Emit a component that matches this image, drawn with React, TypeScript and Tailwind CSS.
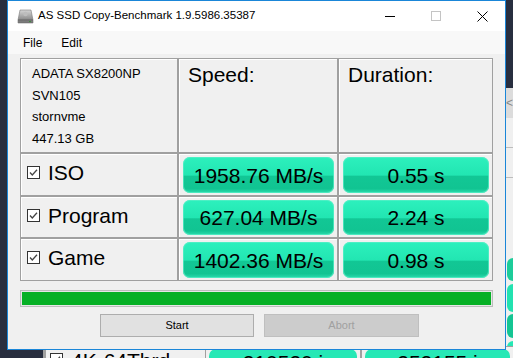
import React from 'react'

const sans = "font-['Liberation_Sans',Arial,sans-serif]"

function Check() {
    return (
        <span className="flex h-[13px] w-[13px] items-center justify-center border border-[#333] bg-white">
            <svg width="11" height="11" viewBox="0 0 11 11">
                <path d="M2 5.5 L4.3 8 L9 2.8" fill="none" stroke="#444" strokeWidth="1.3" />
            </svg>
        </span>
    )
}

function Value({ text }: { text: string }) {
    return (
        <div className="flex h-full items-center justify-center rounded-[7px] bg-[linear-gradient(to_bottom,#2df0bd_0%,#22e6b2_50%,#12c795_54%,#11c492_88%,#2cdcae_100%)] shadow-[inset_0_0_0_1px_rgba(90,240,200,0.7)]">
            <span className="text-[21px] leading-none text-black">{text}</span>
        </div>
    )
}

function Row({ label, speed, dur }: { label: string; speed: string; dur: string }) {
    return (
        <>
            <div className="flex items-center gap-[8px] border-l border-t border-white bg-[#f0f0f0] pl-[5px] pb-[5px]">
                <Check />
                <span className="text-[21px] leading-none text-black">{label}</span>
            </div>
            <div className="border-l border-t border-white bg-[#f0f0f0] px-[3px] py-[2px]">
                <Value text={speed} />
            </div>
            <div className="border-l border-t border-white bg-[#f0f0f0] px-[3px] py-[2px]">
                <Value text={dur} />
            </div>
        </>
    )
}

function DriveIcon() {
    return (
        <svg width="17" height="15" viewBox="0 0 17 15">
            <defs>
                <linearGradient id="dg" x1="0" y1="0" x2="0" y2="1">
                    <stop offset="0" stopColor="#d6d6d6" />
                    <stop offset="0.6" stopColor="#9a9a9a" />
                    <stop offset="1" stopColor="#6e6e6e" />
                </linearGradient>
            </defs>
            <path d="M3 1 H14 L16 11 V14 H1 V11 Z" fill="url(#dg)" stroke="#7a7a7a" strokeWidth="0.6" />
            <path d="M1 11 H16" stroke="#5a5a5a" strokeWidth="0.8" />
            <circle cx="8.5" cy="5" r="2.2" fill="#bdbdbd" />
            <rect x="12" y="12" width="2" height="1" fill="#3f8f3f" />
        </svg>
    )
}

export default function App() {
    return (
        <div className={`relative h-[358px] w-[513px] overflow-hidden bg-[#282e3f] ${sans}`}>
            {/* window behind, right edge */}
            <div className="absolute left-[505px] top-[88px] h-[270px] w-[20px] bg-[#f0f0f0]">
                <div className="flex h-[30px] items-center bg-[#dcdcdc] pl-[1px] text-[12px] text-[#888]">&lt;</div>
                <div className="mt-[29px] h-px bg-[#bdbdbd]" />
                <div className="mt-[29px] h-px bg-[#bdbdbd]" />
                <div className="absolute left-[2px] top-[170px] h-[23px] w-[30px] rounded-[6px] bg-[#1ccc9a]" />
                <div className="absolute left-[2px] top-[196px] h-[28px] w-[30px] rounded-[6px] bg-[#22e2b0]" />
                <div className="absolute left-[2px] top-[226px] h-[24px] w-[30px] rounded-[6px] bg-[#14c593]" />
                <div className="absolute left-[2px] top-[253px] h-[30px] w-[30px] rounded-[6px] bg-[#26e8b5]" />
            </div>

            {/* window behind, bottom edge */}
            <div className="absolute left-[43px] top-[346px] flex h-[40px] w-[470px] border-l-[3px] border-t border-[#a0a0a0] bg-[#f0f0f0]">
                <div className="flex w-[160px] gap-[8px] pl-[4px] pt-[6px]">
                    <Check />
                    <span className="mt-[-3px] text-[21px] leading-none text-black">4K-64Thrd</span>
                </div>
                <div className="w-[156px] border-l border-[#a0a0a0] px-[3px] pt-[2px]">
                    <div className="flex h-[34px] justify-center rounded-[7px] bg-[#26e8b5] pt-[3px] text-[21px] leading-none">210520 i</div>
                </div>
                <div className="w-[154px] border-l-[2px] border-[#a0a0a0] px-[3px] pt-[2px]">
                    <div className="flex h-[34px] justify-center rounded-[7px] bg-[#26e8b5] pt-[3px] text-[21px] leading-none">252155 i</div>
                </div>
            </div>

            {/* main window */}
            <div className="absolute left-[7px] top-0 flex h-[350px] w-[499px] flex-col border border-[#1a86d8] bg-[#f0f0f0]">
                <div className="flex h-[30px] items-center bg-white">
                    <div className="ml-[9px] mr-[4px] flex w-[17px] items-center">
                        <DriveIcon />
                    </div>
                    <span className="text-[11.5px] text-black">AS SSD Copy-Benchmark 1.9.5986.35387</span>
                    <div className="flex-1" />
                    <div className="flex h-full w-[46px] items-center justify-center">
                        <div className="h-px w-[10px] bg-black" />
                    </div>
                    <div className="flex h-full w-[46px] items-center justify-center">
                        <div className="h-[10px] w-[10px] border border-[#c4c4c4]" />
                    </div>
                    <div className="flex h-full w-[46px] items-center justify-center">
                        <svg width="11" height="11" viewBox="0 0 11 11">
                            <path d="M0.5 0.5 L10.5 10.5 M10.5 0.5 L0.5 10.5" stroke="#000" strokeWidth="1" />
                        </svg>
                    </div>
                </div>

                <div className="flex h-[23px] items-center gap-[19px] bg-[#f8f8f8] pl-[15px] text-[12px] text-black">
                    <span>File</span>
                    <span>Edit</span>
                </div>

                <div className="flex flex-col pl-[12px]">
                    <div className="mt-[4px] grid w-[473px] grid-cols-[156px_158px_153px] grid-rows-[93px_41px_40px_41px] gap-[2px] border border-[#a0a0a0] bg-[#a0a0a0]">
                        <div className="border-l border-t border-white bg-[#f0f0f0] pl-[10px] pt-[3px] text-[13px] leading-[21.5px] text-black">
                            <div>ADATA SX8200NP</div>
                            <div>SVN105</div>
                            <div>stornvme</div>
                            <div>447.13 GB</div>
                        </div>
                        <div className="border-l border-t border-white bg-[#f0f0f0] pl-[8px] pt-[3px] text-[21px] leading-[24px] text-black">Speed:</div>
                        <div className="border-l border-t border-white bg-[#f0f0f0] pl-[8px] pt-[3px] text-[21px] leading-[24px] text-black">Duration:</div>
                        <Row label="ISO" speed="1958.76 MB/s" dur="0.55 s" />
                        <Row label="Program" speed="627.04 MB/s" dur="2.24 s" />
                        <Row label="Game" speed="1402.36 MB/s" dur="0.98 s" />
                    </div>

                    <div className="mt-[9px] h-[17px] w-[473px] border border-[#bcbcbc] bg-[#e6e6e6] p-px">
                        <div className="h-full w-full bg-[#06b025]" />
                    </div>

                    <div className="ml-[80px] mt-[7px] flex gap-[10px]">
                        <div className="flex h-[23px] w-[154px] items-center justify-center border border-[#adadad] bg-[#e1e1e1] text-[11px] text-black">Start</div>
                        <div className="flex h-[23px] w-[155px] items-center justify-center border border-[#bfbfbf] bg-[#cccccc] text-[11px] text-[#a0a0a0]">Abort</div>
                    </div>
                </div>
            </div>
        </div>
    )
}
